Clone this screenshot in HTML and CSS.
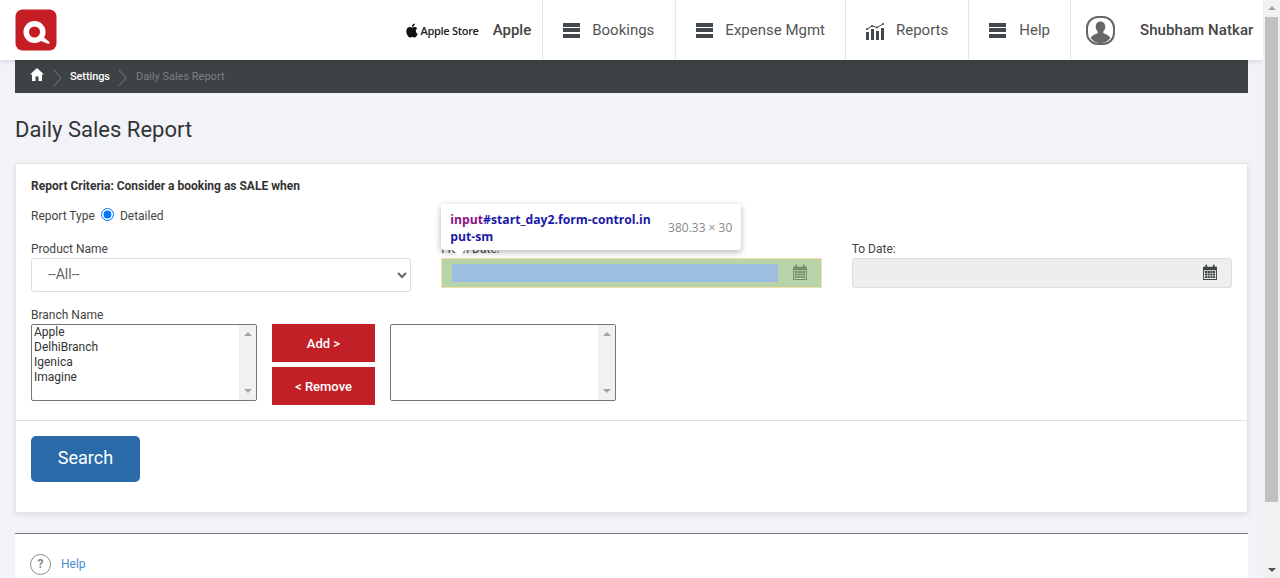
FILE: index.html
```html
<!DOCTYPE html>
<html lang="en">

<head>
    <meta charset="UTF-8">
    <meta name="viewport" content="width=device-width, initial-scale=1.0">
    <title>Daily Sales Report</title>
    <link rel="stylesheet" href="styles.css">
</head>

<body>
    <div class="page">
        <header class="topbar">
            <a class="logo" href="#">
                <svg width="42" height="42" viewBox="0 0 42 42">
                    <rect x="0.500" y="0.500" width="41" height="41" rx="7" fill="#c41e24" />
                    <circle cx="19.500" cy="23" r="8.300" fill="none" stroke="#fff" stroke-width="5.500" />
                    <path d="M21 30 L33.500 35 L35 33.500 L26 26 Z" fill="#fff" />
                </svg>
            </a>
            <nav class="nav">
                <div class="store">
                    <svg class="apple-logo" width="14" height="15" viewBox="0 0 24 24">
                        <path d="M12.152 6.896c-.948 0-2.415-1.078-3.96-1.04-2.04.027-3.91 1.183-4.961 3.014-2.117 3.675-.546 9.103 1.519 12.09 1.013 1.454 2.208 3.09 3.792 3.039 1.52-.065 2.09-.987 3.935-.987 1.831 0 2.35.987 3.96.948 1.637-.026 2.676-1.48 3.676-2.948 1.156-1.688 1.636-3.325 1.662-3.415-.039-.013-3.182-1.221-3.22-4.857-.026-3.04 2.48-4.494 2.597-4.559-1.429-2.09-3.623-2.324-4.39-2.376-2-.156-3.675 1.09-4.61 1.09zM15.53 3.83c.843-1.012 1.4-2.427 1.245-3.83-1.207.052-2.662.805-3.532 1.818-.78.896-1.454 2.338-1.273 3.714 1.338.104 2.715-.688 3.559-1.701" fill="#111" />
                    </svg>
                    <span class="store-name">Apple Store</span>
                    <span class="store-branch">Apple</span>
                </div>
                <a class="nav-item nav-bookings" href="#">
                    <span class="nav-icon"><span class="burger"></span></span>
                    Bookings
                </a>
                <a class="nav-item nav-expense" href="#">
                    <span class="nav-icon"><span class="burger"></span></span>
                    Expense Mgmt
                </a>
                <a class="nav-item" href="#">
                    <span class="nav-icon">
                        <svg class="reports-icon" width="18" height="17" viewBox="0 0 18 17" fill="#42484b">
                            <rect x="0" y="9" width="3" height="8" />
                            <rect x="5" y="6" width="3" height="11" />
                            <rect x="10" y="8" width="3" height="9" />
                            <rect x="15" y="5" width="3" height="12" />
                            <path d="M1 6 L6 3 L11 4.500 L17 1" fill="none" stroke="#42484b" stroke-width="1" />
                            <circle cx="1" cy="6" r="1" />
                            <circle cx="6" cy="3" r="1" />
                            <circle cx="11" cy="4.500" r="1" />
                            <circle cx="17" cy="1" r="1" />
                        </svg>
                    </span>
                    Reports
                </a>
                <a class="nav-item" href="#">
                    <span class="nav-icon"><span class="burger"></span></span>
                    Help
                </a>
                <div class="user">
                    <svg width="29" height="29" viewBox="0 0 29 29">
                        <rect x="1" y="1" width="27" height="27" rx="11" fill="#fff" stroke="#666" stroke-width="2" />
                        <path d="M14.500 5.500c-3 0-4.800 2.300-4.800 5.300 0 2 .9 3.700 2 4.800v1.700c-2.700 1.200-6 2-7 4.700 2 3 5.500 5 9.800 5s7.800-2 9.800-5c-1-2.700-4.300-3.500-7-4.700v-1.700c1.100-1.100 2-2.800 2-4.800 0-3-1.800-5.300-4.800-5.300z" fill="#666" />
                    </svg>
                    <span class="user-name">Shubham Natkar</span>
                </div>
            </nav>
        </header>

        <main class="content">
            <div class="crumbs">
                <svg class="crumb-home" width="14" height="13" viewBox="0 0 14 13" fill="#fff">
                    <path d="M7 0 L14 6.500 L12 6.500 L12 13 L8.500 13 L8.500 8.500 L5.500 8.500 L5.500 13 L2 13 L2 6.500 L0 6.500 Z" />
                </svg>
                <svg class="crumb-sep" width="9" height="18" viewBox="0 0 9 18">
                    <path d="M1 1 L8 9 L1 17" fill="none" stroke="#666" stroke-width="1.200" />
                </svg>
                <a class="crumb-link" href="#">Settings</a>
                <svg class="crumb-sep" width="9" height="18" viewBox="0 0 9 18">
                    <path d="M1 1 L8 9 L1 17" fill="none" stroke="#666" stroke-width="1.200" />
                </svg>
                <span class="crumb-current">Daily Sales Report</span>
            </div>

            <h1 class="title">Daily Sales Report</h1>

            <section class="card">
                <div class="card-body">
                    <div class="criteria">Report Criteria: Consider a booking as SALE when</div>
                    <div class="report-type">
                        <span>Report Type</span>
                        <input type="radio" name="type" checked>
                        <span>Detailed</span>
                    </div>

                    <div class="fields">
                        <div class="field">
                            <label class="label">Product Name</label>
                            <select class="select">
                                <option>--All--</option>
                            </select>
                        </div>
                        <div class="field">
                            <label class="label">From Date:</label>
                            <div class="date-highlight">
                                <div class="date-content"></div>
                                <svg class="cal" width="14" height="16" viewBox="0 0 15 17" fill="#6f8f68">
                                    <path d="M0 3h2.500V1.500a1 1 0 0 1 2 0V3h6V1.500a1 1 0 0 1 2 0V3H15v14H0z M1 6.500V16h13V6.500z" fill-rule="evenodd" />
                                    <path d="M2 7.500h2.500v2H2z M5 7.500h2.300v2H5z M7.800 7.500h2.300v2H7.800z M10.600 7.500h2.400v2h-2.400z M2 10.200h2.500v2H2z M5 10.200h2.300v2H5z M7.800 10.200h2.300v2H7.800z M10.600 10.200h2.400v2h-2.400z M2 13h2.500v2H2z M5 13h2.300v2H5z M7.800 13h2.300v2H7.800z M10.600 13h2.400v2h-2.400z" />
                                </svg>
                            </div>
                            <div class="inspect-tip">
                                <div class="tip-name"><span class="tip-tag">input</span>#start_day2.form-control.in put-sm</div>
                                <div class="tip-size">380.33 × 30</div>
                            </div>
                        </div>
                        <div class="field">
                            <label class="label">To Date:</label>
                            <div class="date-box">
                                <svg class="cal" width="14" height="16" viewBox="0 0 15 17" fill="#3f4447">
                                    <path d="M0 3h2.500V1.500a1 1 0 0 1 2 0V3h6V1.500a1 1 0 0 1 2 0V3H15v14H0z M1 6.500V16h13V6.500z" fill-rule="evenodd" />
                                    <path d="M2 7.500h2.500v2H2z M5 7.500h2.300v2H5z M7.800 7.500h2.300v2H7.800z M10.600 7.500h2.400v2h-2.400z M2 10.200h2.500v2H2z M5 10.200h2.300v2H5z M7.800 10.200h2.300v2H7.800z M10.600 10.200h2.400v2h-2.400z M2 13h2.500v2H2z M5 13h2.300v2H5z M7.800 13h2.300v2H7.800z M10.600 13h2.400v2h-2.400z" />
                                </svg>
                            </div>
                        </div>
                    </div>

                    <label class="label">Branch Name</label>
                    <div class="branches">
                        <div class="listbox">
                            <ul class="list-items">
                                <li>Apple</li>
                                <li>DelhiBranch</li>
                                <li>Igenica</li>
                                <li>Imagine</li>
                            </ul>
                            <div class="list-scroll"><span class="arrow-up"></span><span class="arrow-down"></span></div>
                        </div>
                        <div class="move-btns">
                            <button class="move-btn">Add &gt;</button>
                            <button class="move-btn">&lt; Remove</button>
                        </div>
                        <div class="listbox">
                            <ul class="list-items"></ul>
                            <div class="list-scroll"><span class="arrow-up"></span><span class="arrow-down"></span></div>
                        </div>
                    </div>
                </div>
                <div class="card-foot">
                    <button class="search-btn">Search</button>
                </div>
            </section>

            <footer class="help-bar">
                <span class="help-icon">?</span>
                <a class="help-link" href="#">Help</a>
            </footer>
        </main>
    </div>

    <div class="scrollbar">
        <span class="bar-up"></span>
        <div class="bar-thumb"></div>
        <span class="bar-down"></span>
    </div>
</body>

</html>
```

FILE: styles.css
```css
* {
    box-sizing: border-box;
}

html,
body {
    height: 578px;
    margin: 0;
    overflow: hidden;
}

body {
    display: flex;
    font-family: Roboto, "Liberation Sans", sans-serif;
    font-size: 12px;
    color: #444;
    background-color: #f1f3f8;
}

a {
    text-decoration: none;
}

.page {
    width: 1263px;
    height: 578px;
    overflow: hidden;
}

/* top bar */
.topbar {
    display: flex;
    justify-content: space-between;
    align-items: center;
    height: 60px;
    padding-left: 15px;
    background-color: #ffffff;
    box-shadow: 0 1px 5px rgba(0, 0, 0, 0.15);
    position: relative;
}

.logo {
    display: flex;
    height: 42px;
}

.nav {
    display: flex;
    height: 60px;
    align-items: stretch;
}

.store {
    display: flex;
    align-items: center;
    padding-right: 11px;
}

.apple-logo {
    margin-right: 2px;
}

.store-name {
    font-family: "Open Sans", sans-serif;
    font-size: 11px;
    font-weight: 600;
    letter-spacing: -0.3px;
    color: #222;
    margin-right: 14px;
}

.store-branch {
    font-size: 15px;
    font-weight: 500;
    color: #444;
}

.nav-item {
    display: flex;
    align-items: center;
    padding: 0 20px;
    border-left: 1px solid #e6e6e6;
    font-size: 15px;
    color: #555;
}

.nav-bookings {
    padding-right: 21px;
}

.nav-bookings .nav-icon,
.nav-expense .nav-icon {
    width: 29px;
}

.nav-icon {
    display: flex;
    align-items: center;
    width: 30px;
}

.reports-icon {
    margin-top: 3px;
}

.burger {
    display: block;
    width: 17px;
    height: 15px;
    border-top: 4px solid #42484b;
    border-bottom: 4px solid #42484b;
    position: relative;
}

.burger::after {
    content: "";
    position: absolute;
    left: 0;
    right: 0;
    top: 1.500px;
    height: 4px;
    background-color: #42484b;
}

.user {
    display: flex;
    align-items: center;
    width: 193px;
    padding-left: 15px;
    border-left: 1px solid #e6e6e6;
}

.user-name {
    margin-left: 25px;
    font-size: 15px;
    font-weight: 500;
    letter-spacing: 0.08px;
    color: #444;
    white-space: nowrap;
}

/* page */
.content {
    padding: 0 15px;
}

.crumbs {
    display: flex;
    align-items: center;
    height: 33px;
    padding-left: 15px;
    background-color: #3d4245;
    font-size: 11px;
}

.crumb-home {
    margin-top: -5px;
}

.crumb-sep {
    margin: 2px 8.500px 0;
}

.crumb-link {
    font-weight: 500;
    letter-spacing: -0.1px;
    color: #ffffff;
}

.crumb-current {
    color: #7c7f81;
}

.title {
    margin: 24px 0 20px;
    font-size: 22px;
    line-height: 26px;
    font-weight: 400;
    color: #333;
}

.card {
    height: 350px;
    background-color: #ffffff;
    border: 1px solid #e3e3e3;
    border-radius: 2px;
    box-shadow: 0 2px 6px rgba(0, 0, 0, 0.08);
}

.card-body {
    height: 257px;
    padding: 13px 15px 0;
    border-bottom: 1px solid #dddddd;
}

.criteria {
    line-height: 18px;
    font-weight: 700;
    color: #333;
}

.report-type {
    display: flex;
    align-items: center;
    height: 18px;
    margin-top: 12px;
}

.report-type input {
    width: 13px;
    height: 13px;
    margin: -3px 6px 0 6px;
}

.fields {
    display: grid;
    grid-template-columns: repeat(3, 1fr);
    gap: 30px;
    margin-top: 15px;
    height: 52px;
}

.field {
    position: relative;
}

.label {
    display: block;
    line-height: 18px;
}

.fields + .label {
    margin-top: 14px;
}

.select {
    width: 100%;
    height: 34px;
    padding: 0 12px 2px;
    border: 1px solid #dddddd;
    border-radius: 3px;
    background-color: #ffffff;
    font-family: Roboto, sans-serif;
    font-size: 14px;
    color: #666;
}

.date-highlight {
    display: flex;
    height: 30px;
    padding: 5px 14px 5px 10px;
    align-items: center;
    justify-content: space-between;
    background-color: #b9d3a9;
    border: 1px solid #f0dfa8;
}

.date-content {
    width: 326px;
    height: 18px;
    background-color: #9dbee0;
}

.date-box {
    display: flex;
    justify-content: flex-end;
    align-items: center;
    height: 30px;
    padding-right: 14px;
    background-color: #eeeeee;
    border: 1px solid #dedede;
    border-radius: 3px;
}

.cal {
    margin-top: -3px;
}

/* devtools inspect tooltip */
.inspect-tip {
    position: absolute;
    left: 0;
    top: -36px;
    display: flex;
    justify-content: space-between;
    align-items: center;
    width: 300px;
    height: 46px;
    padding: 0 9px;
    background-color: #ffffff;
    border-radius: 3px;
    box-shadow: 0 2px 6px rgba(0, 0, 0, 0.3);
    z-index: 2;
}

.inspect-tip::after {
    content: "";
    position: absolute;
    left: 12px;
    top: 46px;
    border-left: 6px solid transparent;
    border-right: 6px solid transparent;
    border-top: 7px solid #ffffff;
}

.tip-name {
    width: 206px;
    padding-top: 2px;
    font-family: "Open Sans", sans-serif;
    font-size: 12.200px;
    line-height: 17px;
    font-weight: 700;
    color: #1a1aa6;
    word-break: break-all;
}

.tip-tag {
    color: #881280;
}

.tip-size {
    font-family: "Open Sans", sans-serif;
    font-size: 12px;
    color: #888;
    white-space: nowrap;
}

/* branch lists */
.branches {
    display: flex;
    align-items: flex-start;
    gap: 15px;
}

.listbox {
    display: flex;
    justify-content: space-between;
    width: 226px;
    height: 77px;
    border: 1px solid #767676;
    border-radius: 2px;
    background-color: #ffffff;
}

.list-items {
    margin: 0;
    padding: 0 0 0 2px;
    list-style: none;
    line-height: 15px;
    color: #333;
}

.list-scroll {
    display: flex;
    flex-direction: column;
    justify-content: space-between;
    align-items: center;
    width: 17px;
    padding: 7px 0;
    background-color: #f1f1f1;
}

.arrow-up,
.bar-up {
    border-left: 4px solid transparent;
    border-right: 4px solid transparent;
    border-bottom: 4px solid #a3a3a3;
}

.arrow-down {
    border-left: 4px solid transparent;
    border-right: 4px solid transparent;
    border-top: 4px solid #a3a3a3;
}

.move-btns {
    display: flex;
    flex-direction: column;
    gap: 5px;
}

.move-btn {
    width: 103px;
    height: 38px;
    padding: 0;
    border: none;
    background-color: #c22026;
    font-family: Roboto, sans-serif;
    font-size: 13px;
    font-weight: 500;
    color: #ffffff;
}

.card-foot {
    padding: 15px;
}

.search-btn {
    display: block;
    width: 109px;
    height: 46px;
    padding: 0 0 3px;
    border: none;
    border-radius: 5px;
    background-color: #2a6aa8;
    font-family: Roboto, sans-serif;
    font-size: 18px;
    color: #ffffff;
}

.help-bar {
    display: flex;
    align-items: center;
    height: 60px;
    margin-top: 20px;
    padding: 0 15px 0 15px;
    border-top: 1px solid #777777;
    background-color: #ffffff;
}

.help-icon {
    display: flex;
    justify-content: center;
    align-items: center;
    width: 21px;
    height: 21px;
    margin-top: 1px;
    border: 1.500px solid #888888;
    border-radius: 50%;
    font-weight: 700;
    color: #888;
}

.help-link {
    margin-left: 10px;
    color: #4a8ad4;
}

/* window scrollbar */
.scrollbar {
    display: flex;
    flex-direction: column;
    align-items: center;
    width: 17px;
    height: 578px;
    background-color: #f1f1f1;
}

.bar-up {
    margin-top: 6px;
    margin-bottom: 7px;
}

.bar-thumb {
    width: 13px;
    height: 485px;
    background-color: #c1c1c1;
}

.bar-down {
    margin-top: 66px;
    border-left: 4px solid transparent;
    border-right: 4px solid transparent;
    border-top: 4px solid #505050;
}
```
